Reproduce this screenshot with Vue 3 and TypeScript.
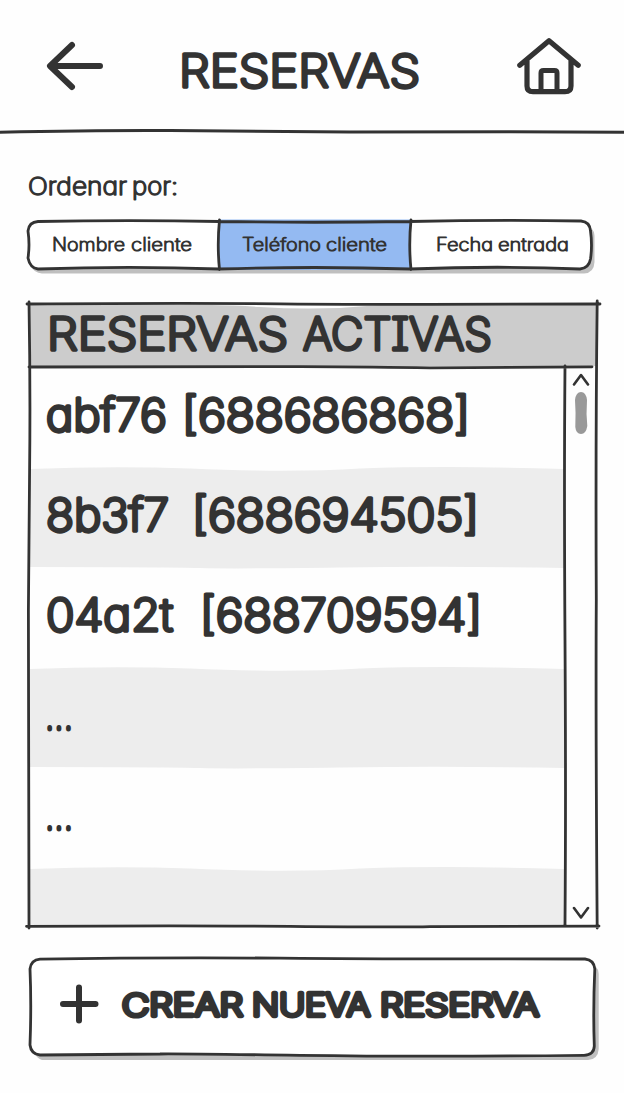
<script setup lang="ts">
import { h, ref, type FunctionalComponent } from 'vue'

interface Word {
  t: string
  x: number
  w: number
}

// A line of marker-style lettering: each word is fitted to its own width.
const Ink: FunctionalComponent<{ width: number; height: number; base: number; words: Word[] }> = (p) =>
  h(
    'svg',
    { width: p.width, height: p.height, viewBox: `0 0 ${p.width} ${p.height}` },
    p.words.map((word) =>
      h('text', { x: word.x, y: p.base, textLength: word.w, lengthAdjust: 'spacingAndGlyphs' }, word.t),
    ),
  )
Ink.props = ['width', 'height', 'base', 'words']

const title: Word[] = [{ t: 'RESERVAS', x: 1, w: 241 }]
const orderLabel: Word[] = [
  { t: 'Ordenar', x: 0, w: 99 },
  { t: 'por:', x: 104, w: 46 },
]
const tabs = [
  { id: 'nombre', width: 191, words: [{ t: 'Nombre', x: 24, w: 73 }, { t: 'cliente', x: 103, w: 61 }] },
  { id: 'telefono', width: 191, words: [{ t: 'Teléfono', x: 23, w: 79 }, { t: 'cliente', x: 107, w: 61 }] },
  { id: 'fecha', width: 181, words: [{ t: 'Fecha', x: 26, w: 57 }, { t: 'entrada', x: 88, w: 71 }] },
]
const active = ref('telefono')

const heading: Word[] = [
  { t: 'RESERVAS', x: 17, w: 241 },
  { t: 'ACTIVAS', x: 273, w: 189 },
]
const rows: Word[][] = [
  [{ t: 'abf76', x: 16, w: 121 }, { t: '[688686868]', x: 152, w: 288 }],
  [{ t: '8b3f7', x: 16, w: 123 }, { t: '[688694505]', x: 162, w: 287 }],
  [{ t: '04a2t', x: 16, w: 127 }, { t: '[688709594]', x: 170, w: 282 }],
  [{ t: '...', x: 15, w: 28 }],
  [{ t: '...', x: 15, w: 28 }],
  [],
]
const create: Word[] = [
  { t: 'CREAR', x: 0, w: 121 },
  { t: 'NUEVA', x: 130, w: 118 },
  { t: 'RESERVA', x: 258, w: 159 },
]
</script>

<template>
  <main class="screen">
    <header class="top">
      <button class="icon back" aria-label="Volver">
        <svg width="60" height="52" viewBox="45 40 60 52">
          <path d="M72 45 L50 66 L72 87 M51 66 H100" />
        </svg>
      </button>
      <h1><Ink class="ink big" :width="250" :height="60" :base="44.7" :words="title" /></h1>
      <button class="icon home" aria-label="Inicio">
        <svg width="68" height="60" viewBox="515 37 68 60">
          <path d="M519.8 65.3 L549 40.8 L578.2 65.3 M527 61 V86 Q527 91.7 533 91.7 H565 Q571 91.7 571 86 V61" />
          <path class="door" d="M541 90 V73 Q541 70.5 543.5 70.5 H554.5 Q557 70.5 557 73 V90" />
        </svg>
      </button>
      <svg class="rule" width="624" height="8" viewBox="0 127 624 8">
        <path d="M-2 132.3 C60 131 110 130.3 170 130.6 S280 132 350 132 S540 131.5 626 132.2" />
      </svg>
    </header>

    <section class="order">
      <Ink class="ink label" :width="160" :height="34" :base="24.8" :words="orderLabel" />
      <div class="tabs">
        <svg class="frame" width="576" height="60" viewBox="24 216 576 60">
          <path class="shadow" d="M42 225 H584 Q594 226 594.5 236 V262 Q594 273 584 273.5 H42 Q34 273 31 266 Z" />
          <path class="paper" d="M38 221.5 Q130 219.8 219 221.5 Q315 223 410 221.5 Q500 219.7 581 221 Q590 222 590.5 231 Q592.5 245 590.5 259 Q589 268 580 269 Q500 265.5 410 269 Q315 266 219 269 Q130 265.8 38 269 Q30 268 28 258 Q30 245 28 231 Q29 222 38 221.5 Z" />
          <path class="selected" d="M219 219.5 H411 V270 H219 Z" />
          <path class="stroke" d="M38 221.5 Q130 219.8 219 221.5 Q315 223 410 221.5 Q500 219.7 581 221 Q590 222 590.5 231 Q592.5 245 590.5 259 Q589 268 580 269 Q500 265.5 410 269 Q315 266 219 269 Q130 265.8 38 269 Q30 268 28 258 Q30 245 28 231 Q29 222 38 221.5 Z M219.5 220 Q217 245 219.5 269.5 M411 220 Q408.5 245 411 269.5" />
        </svg>
        <button v-for="tab in tabs" :key="tab.id" class="tab" :aria-pressed="active === tab.id" @click="active = tab.id">
          <Ink class="ink small" :width="tab.width" :height="48" :base="29.9" :words="tab.words" />
        </button>
      </div>
    </section>

    <section class="list">
      <svg class="frame" width="580" height="634" viewBox="24 298 580 634">
        <path class="head-fill" d="M30 305 Q200 303 260 307 T380 305 H596 V366 H30 Z" />
        <g class="stripe">
          <path d="M30 469 Q110 466 190 468.5 Q290 473 360 468.5 Q450 465.5 564 469 V568 Q450 566 340 567.5 T200 568 T30 567 Z" />
          <path d="M30 669 Q110 666 190 668.5 Q290 673 360 668.5 Q450 665.5 564 669 V768 Q450 766 340 767.5 T200 768 T30 767 Z" />
          <path d="M30 869 Q110 866 190 868.5 Q290 873 360 868.5 Q450 865.5 564 869 V926 H30 Z" />
        </g>
        <path class="stroke" d="M27 304 Q180 303 280 303.8 T430 304.3 L600 304 M29 302 Q30.5 390 29.6 470 T28.4 610 Q28.2 780 29 928 M597.2 301 Q595.5 440 596.3 600 Q595.6 720 597.2 928 M26.5 926.3 Q180 925.3 290 926.3 T430 926.6 L599 926.1 M29 367 Q220 366.2 300 366.6 T430 367.8 L592 366.8 M565 366 Q564 480 565 640 T565 925" />
        <path class="chevron" d="M574 384.5 L581 375 L588 384.5 M574 908 L581 917.5 L588 908" />
        <path class="thumb" d="M575 400 Q576 392 581 392 Q586 392 587 400 Q586 414 587.3 426 Q586 434 581 434 Q576 434 575.3 427 Q576 413 575 400 Z" />
      </svg>
      <h2><Ink class="ink big" :width="535" :height="62" :base="45.9" :words="heading" /></h2>
      <ul>
        <li v-for="(row, i) in rows" :key="i">
          <Ink :class="['ink', row.length === 1 ? 'dots' : 'big']" :width="535" :height="100" :base="row.length === 1 ? 62.4 : 62.8" :words="row" />
        </li>
      </ul>
    </section>

    <button class="create">
      <svg class="frame" width="576" height="108" viewBox="26 954 576 108">
        <path class="shadow" d="M44 963 H588 Q598 964 598.7 974 V1049 Q598 1059.5 588 1060 H42 Q36 1058 33 1050 Z" />
        <path class="paper stroke" d="M40 959.2 Q160 957.2 280 958.2 T430 958.8 L585 959 Q594 960 594.8 969 Q593 1010 594.3 1046 Q594 1055 584 1055.3 Q430 1057 300 1055.3 T160 1054 L40 1055 Q31 1054 30 1045 Q31.5 1005 30 969 Q31 960 40 959.2 Z" />
      </svg>
      <svg class="plus" width="42" height="42" viewBox="58 983 42 42">
        <path d="M79 987.5 V1020.5 M63 1004 H95.5" />
      </svg>
      <Ink class="ink heavy" :width="430" :height="50" :base="35.6" :words="create" />
    </button>
  </main>
</template>

<style>
body {
  margin: 0;
  background: #fefefe;
}
</style>

<style scoped>
.screen {
  width: 624px;
  height: 1093px;
  box-sizing: border-box;
  display: flex;
  flex-direction: column;
  overflow: hidden;
  color: #333;
  font-family: Inter, "Liberation Sans", sans-serif;
}
svg {
  display: block;
  flex: none;
  overflow: visible;
}
button {
  padding: 0;
  border: 0;
  background: none;
  color: inherit;
  font: inherit;
  position: relative;
}
h1,
h2,
ul {
  margin: 0;
  padding: 0;
  list-style: none;
  font-weight: inherit;
}
.ink {
  position: relative;
  fill: #333;
  stroke: #333;
  stroke-linejoin: round;
  stroke-linecap: round;
  font-family: Inter, "Liberation Sans", sans-serif;
  font-weight: 200;
  font-feature-settings: "cv11", "cv08";
}
.big {
  font-size: 44.5px;
  stroke-width: 3.6px;
}
.dots {
  font-size: 44.5px;
  stroke-width: 3px;
}
.label {
  font-size: 24px;
  stroke-width: 1.5px;
}
.small {
  font-size: 18px;
  stroke-width: 1.1px;
}
.heavy {
  font-size: 30.5px;
  stroke-width: 4.4px;
}
.top {
  height: 135px;
  box-sizing: border-box;
  padding: 37px 41px 0 45px;
  display: flex;
  align-items: flex-start;
  position: relative;
}
.top h1 {
  margin: 5px 0 0 73px;
}
.icon {
  fill: none;
  stroke: #333;
  stroke-width: 6px;
  stroke-linecap: round;
  stroke-linejoin: round;
}
.back {
  margin-top: 3px;
}
.home {
  margin-left: auto;
  stroke-width: 5.2px;
}
.door {
  stroke-width: 5px;
}
.rule {
  position: absolute;
  left: 0;
  bottom: 0;
  fill: none;
  stroke: #333;
  stroke-width: 3px;
}
.order {
  padding: 35px 28px 0;
}
.tabs {
  position: relative;
  display: flex;
  height: 50px;
  margin-top: 16px;
}
.tab {
  flex: none;
}
.frame {
  position: absolute;
  left: -4px;
  top: -4px;
}
.stroke {
  fill: none;
  stroke: #333;
  stroke-width: 2.8px;
  stroke-linecap: round;
  stroke-linejoin: round;
}
.paper {
  fill: #fff;
}
.shadow {
  fill: #bfbfbf;
}
.selected {
  fill: #94baf2;
}
.list {
  position: relative;
  width: 567px;
  height: 622px;
  margin: 34px 0 0 30px;
  display: flex;
  flex-direction: column;
}
.list .frame {
  left: -6px;
  top: -6px;
}
.head-fill {
  fill: #ccc;
}
.stripe {
  fill: #ededed;
}
.chevron {
  fill: none;
  stroke: #333;
  stroke-width: 2.6px;
  stroke-linecap: round;
  stroke-linejoin: round;
}
.thumb {
  fill: #999;
}
.list h2 {
  height: 64px;
}
.list ul {
  width: 535px;
  height: 558px;
  overflow: hidden;
}
.list li {
  height: 100px;
}
.create {
  width: 566px;
  height: 98px;
  margin: 32px 0 0 30px;
  display: flex;
  align-items: flex-start;
  gap: 22px;
  padding: 25px 0 0 28px;
}
.plus {
  position: relative;
  fill: none;
  stroke: #333;
  stroke-width: 6px;
  stroke-linecap: round;
}
.create .ink {
  margin-top: -3px;
}
</style>
